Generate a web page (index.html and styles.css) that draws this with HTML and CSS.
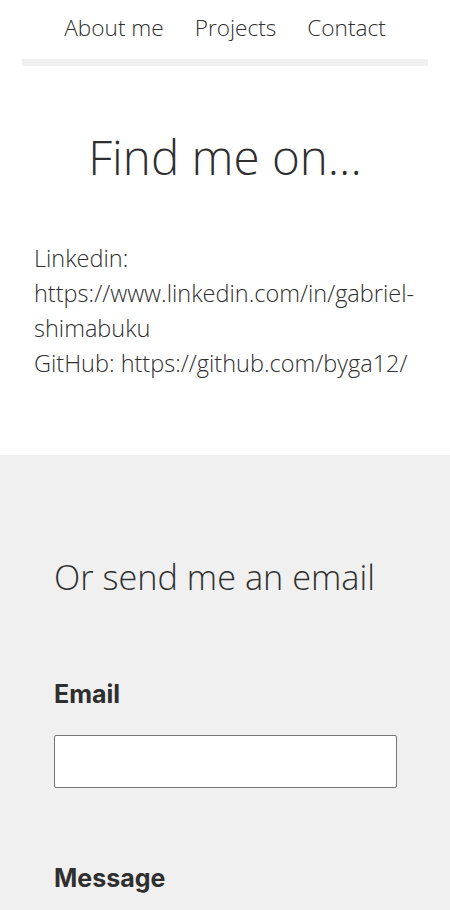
FILE: index.html
```html
<!DOCTYPE html>
<html lang="en">
<head>
<meta charset="utf-8">
<title>Contact</title>
<link rel="stylesheet" href="styles.css">
</head>
<body>
<header class="site-header">
  <nav class="nav">
    <a class="nav-link" href="#">About me</a>
    <a class="nav-link" href="#">Projects</a>
    <a class="nav-link" href="#">Contact</a>
  </nav>
</header>
<main>
  <section class="find">
    <h1 class="find-title">Find me on...</h1>
    <p class="find-text">Linkedin: https://www.linkedin.com/in/gabriel-shimabuku<br>GitHub: https://github.com/byga12/</p>
  </section>
  <section class="mail">
    <h2 class="mail-title">Or send me an email</h2>
    <form class="form">
      <label class="label" for="email">Email</label>
      <input class="input" id="email" type="email">
      <label class="label label-msg" for="msg">Message</label>
    </form>
  </section>
</main>
</body>
</html>
```
FILE: styles.css
```css
* { box-sizing: border-box; }
body {
  margin: 0;
  font-family: "Open Sans", sans-serif;
  font-weight: 300;
  color: #2f2f2f;
  background: #fff;
}
.site-header {
  padding: 0 22px;
}
.nav {
  display: flex;
  justify-content: center;
  gap: 31px;
  padding: 12px 0 15px;
  border-bottom: 7px solid #f0f0f0;
}
.nav-link {
  color: #2f2f2f;
  text-decoration: none;
  font-size: 22.6px;
  line-height: 32px;
}
.find {
  padding: 61px 10px 74px 34px;
}
.find-title {
  margin: 0 0 54px -24px;
  text-align: center;
  font-size: 47.5px;
  font-weight: 300;
  line-height: 60px;
}
.find-text {
  margin: 0;
  font-size: 23.5px;
  line-height: 35px;
}
.mail {
  background: #f0f0f0;
  padding: 100px 53px 20px 54px;
}
.mail-title {
  margin: 0 0 80px;
  font-size: 34.3px;
  font-weight: 300;
  line-height: 44px;
}
.form {
  display: flex;
  flex-direction: column;
}
.label {
  font-family: "Inter", sans-serif;
  font-weight: 700;
  font-size: 25px;
  line-height: 30px;
  color: #2f2f2f;
}
.input {
  margin-top: 26px;
  height: 53px;
  width: 343px;
  border: 1px solid #767676;
  border-radius: 2px;
  background: #fff;
}
.label-msg {
  margin-top: 75px;
}
```
